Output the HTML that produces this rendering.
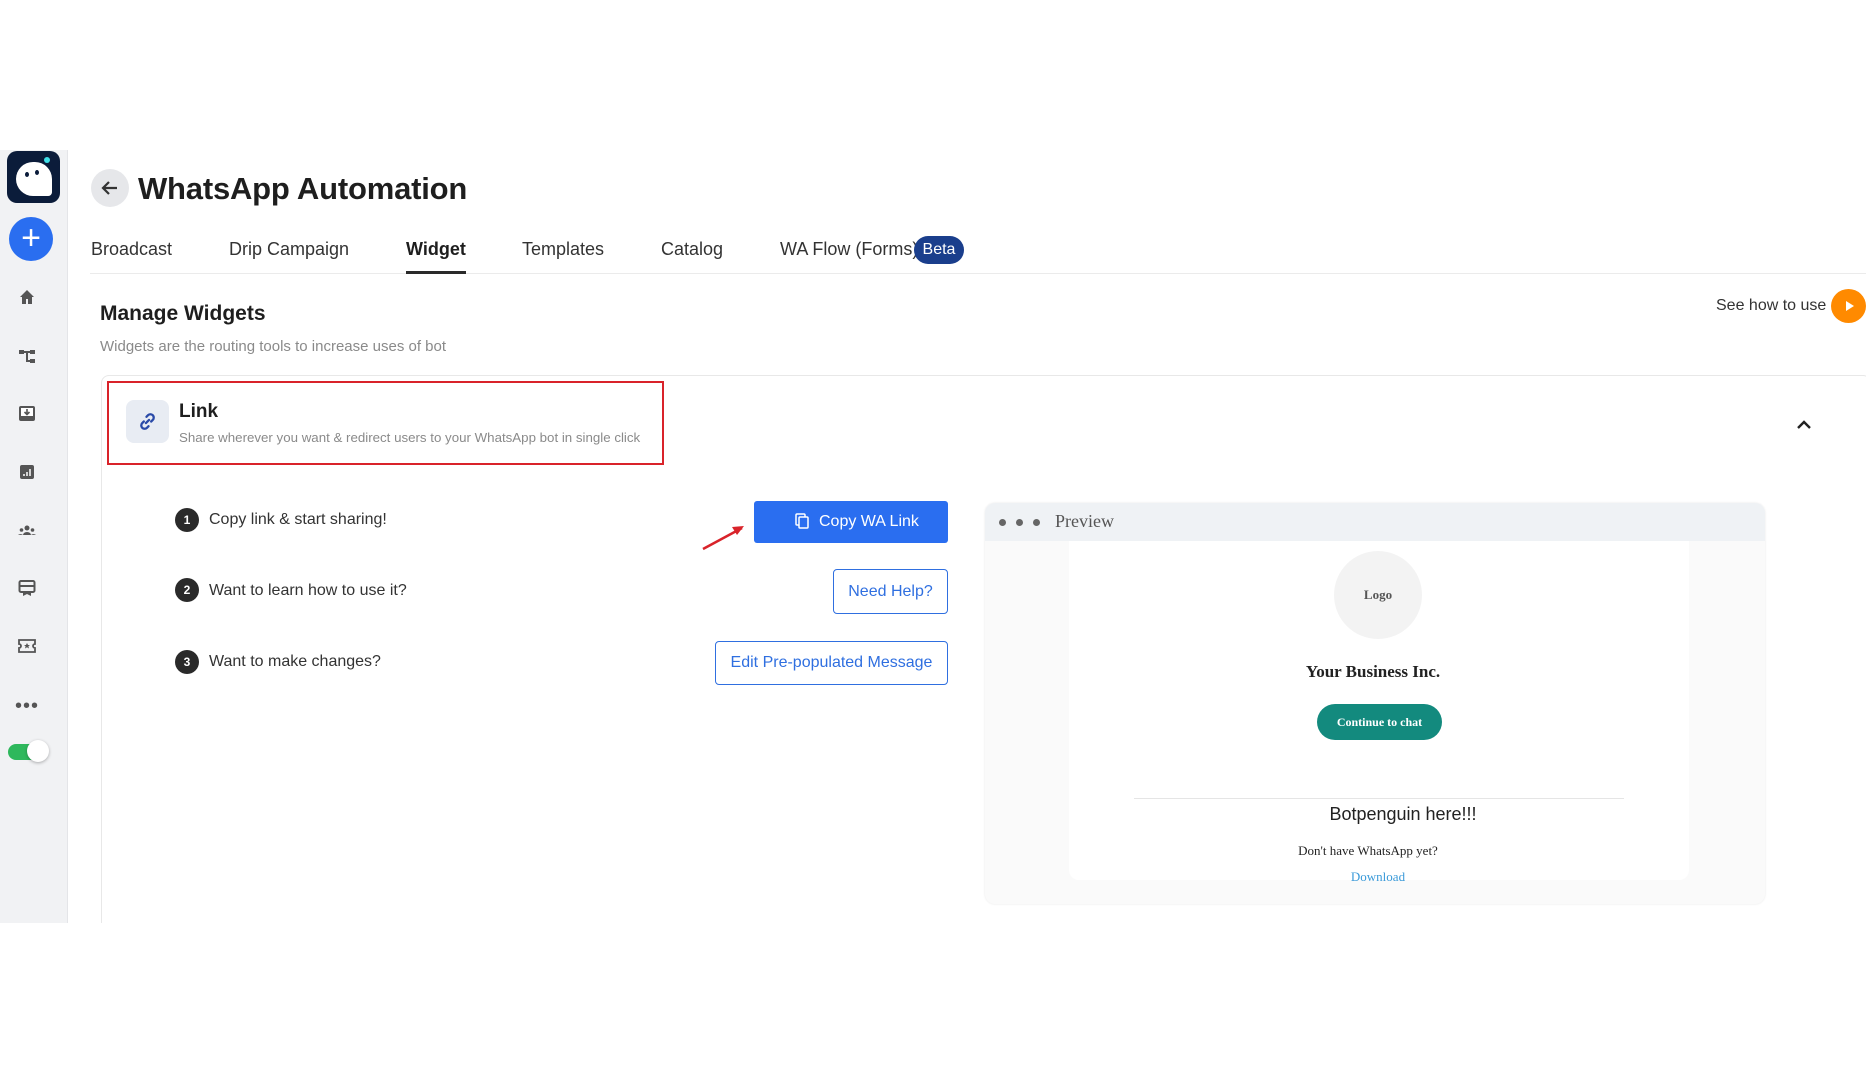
<!DOCTYPE html>
<html><head><meta charset="utf-8"><style>
*{box-sizing:border-box;margin:0;padding:0}
body{width:1866px;height:1080px;background:#fff;position:relative;overflow:hidden;font-family:"Liberation Sans",sans-serif;color:#222}
.a{position:absolute}
.side{left:0;top:150px;width:68px;height:773px;background:#f1f2f4;border-right:1px solid #e4e5e8}
.ic{position:absolute;left:17px;width:20px;height:20px}
.tab{position:absolute;top:239px;font-size:18px;color:#333}
.step{position:absolute;left:175px;width:24px;height:24px;border-radius:50%;background:#2a2a2a;color:#fff;font-size:12px;text-align:center;line-height:24px;font-weight:bold}
.st{position:absolute;left:209px;font-size:16px;color:#333}
.ob{position:absolute;border:1px solid #2f6fe0;border-radius:4px;color:#2f6fe0;font-size:16px;text-align:center;background:#fff}
.serif{font-family:"Liberation Serif",serif}
</style></head><body>
<div class="a side"></div>
<div class="a" style="left:7px;top:151px;width:53px;height:52px;background:#0b1c3a;border-radius:10px"></div>
<div class="a" style="left:16px;top:162px;width:36px;height:34px;background:#fff;border-radius:18px 18px 4px 18px"></div>
<div class="a" style="left:25px;top:172px;width:4px;height:5px;background:#0b1c3a;border-radius:50%"></div>
<div class="a" style="left:35px;top:170px;width:4px;height:5px;background:#0b1c3a;border-radius:50%"></div>
<div class="a" style="left:44px;top:157px;width:6px;height:6px;background:#3fe0e8;border-radius:50%"></div>
<div class="a" style="left:9px;top:217px;width:44px;height:44px;background:#2a6ef0;border-radius:50%;color:#fff;font-size:34px;text-align:center;line-height:42px">+</div>
<svg class="ic" style="top:287px" viewBox="0 0 20 20"><path d="M3 10L10 3l7 7h-2v7h-4v-5H9v5H5v-7z" fill="#555"/></svg>
<svg class="ic" style="top:346px" viewBox="0 0 20 20"><rect x="2" y="4" width="5" height="4" fill="#555"/><rect x="13" y="4" width="5" height="4" fill="#555"/><rect x="13" y="13" width="5" height="4" fill="#555"/><path d="M7 6h6M10 6v9h3" stroke="#555" stroke-width="2" fill="none"/></svg>
<svg class="ic" style="top:404px" viewBox="0 0 20 20"><rect x="2" y="2" width="16" height="15" rx="2" fill="#555"/><rect x="4" y="4" width="12" height="8" fill="#fff"/><path d="M10 5v5M7.5 8l2.5 2.5L12.5 8" stroke="#555" stroke-width="1.6" fill="none"/></svg>
<svg class="ic" style="top:462px" viewBox="0 0 20 20"><rect x="3" y="3" width="14" height="14" rx="2" fill="#555"/><path d="M7 14v-2M10 14v-4M13 14V7" stroke="#fff" stroke-width="1.5"/></svg>
<svg class="ic" style="top:521px" viewBox="0 0 20 20"><circle cx="10" cy="7" r="2.5" fill="#555"/><circle cx="4.5" cy="9" r="1.8" fill="#555"/><circle cx="15.5" cy="9" r="1.8" fill="#555"/><path d="M6 14a4 3 0 0 1 8 0zM1 14a3 2 0 0 1 5 0zM14 14a3 2 0 0 1 5 0z" fill="#555"/></svg>
<svg class="ic" style="top:578px" viewBox="0 0 20 20"><rect x="2.5" y="3" width="15" height="11" rx="1.5" fill="none" stroke="#555" stroke-width="2"/><path d="M3 8h14" stroke="#555" stroke-width="2"/><path d="M6 14v4l4-2 4 2v-4z" fill="#555"/></svg>
<svg class="ic" style="top:636px" viewBox="0 0 20 20"><path d="M2 4h16v4a2 2 0 0 0 0 4v4H2v-4a2 2 0 0 0 0-4z" fill="none" stroke="#555" stroke-width="1.8"/><path d="M10 7l1 2h2l-1.6 1.3.6 2.2-2-1.3-2 1.3.6-2.2L7 9h2z" fill="#555"/></svg>
<div class="a" style="left:15px;top:695px;font-size:20px;color:#555;letter-spacing:1px">•••</div>
<div class="a" style="left:8px;top:744px;width:38px;height:16px;border-radius:8px;background:#2eb85c"></div>
<div class="a" style="left:27px;top:740px;width:22px;height:22px;border-radius:50%;background:#fff;box-shadow:0 1px 3px rgba(0,0,0,.3)"></div>

<div class="a" style="left:91px;top:169px;width:38px;height:38px;border-radius:50%;background:#e6e7ea"></div>
<svg class="a" style="left:100px;top:178px" width="20" height="20" viewBox="0 0 20 20"><path d="M17 10H4M9 4l-6 6 6 6" stroke="#333" stroke-width="2.2" fill="none"/></svg>
<div class="a" style="left:138px;top:171px;font-size:31px;font-weight:bold;color:#1e1e1e;letter-spacing:-0.2px">WhatsApp Automation</div>

<div class="a" style="left:90px;top:273px;width:1776px;height:1px;background:#ebebeb"></div>
<div class="tab" style="left:91px">Broadcast</div>
<div class="tab" style="left:229px">Drip Campaign</div>
<div class="tab" style="left:406px;font-weight:bold;color:#1e1e1e">Widget</div>
<div class="a" style="left:406px;top:271px;width:60px;height:3px;background:#2a2a2a"></div>
<div class="tab" style="left:522px">Templates</div>
<div class="tab" style="left:661px">Catalog</div>
<div class="tab" style="left:780px">WA Flow (Forms)</div>
<div class="a" style="left:914px;top:236px;width:50px;height:28px;border-radius:14px;background:#1a3e8c;color:#fff;font-size:16px;text-align:center;line-height:28px">Beta</div>

<div class="a" style="left:100px;top:302px;font-size:21px;font-weight:bold;color:#1e1e1e">Manage Widgets</div>
<div class="a" style="left:100px;top:338px;font-size:15px;color:#8a8a8a">Widgets are the routing tools to increase uses of bot</div>
<div class="a" style="left:1716px;top:297px;font-size:16px;color:#333">See how to use</div>
<div class="a" style="left:1831px;top:289px;width:35px;height:34px;border-radius:50%;background:#ff8a00"></div>
<svg class="a" style="left:1845px;top:300px" width="10" height="12"><path d="M1 1l8 5-8 5z" fill="#fff"/></svg>

<div class="a" style="left:101px;top:375px;width:1770px;height:560px;border:1px solid #e8e8e8;border-radius:8px"></div>
<div class="a" style="left:107px;top:381px;width:557px;height:84px;border:2px solid #d9232a"></div>
<div class="a" style="left:126px;top:400px;width:43px;height:43px;border-radius:8px;background:#e8ecf3"></div>
<svg class="a" style="left:137px;top:411px" width="21" height="21" viewBox="0 0 20 20"><path d="M8.5 11.5l3-3M9 5.5l1.5-1.5a3 3 0 0 1 4.5 4.5L13.5 10M11 14.5L9.5 16a3 3 0 0 1-4.5-4.5L6.5 10" stroke="#2a4aa8" stroke-width="2.2" fill="none" stroke-linecap="round"/></svg>
<div class="a" style="left:179px;top:401px;font-size:19px;font-weight:bold;color:#1e1e1e">Link</div>
<div class="a" style="left:179px;top:430px;font-size:13.3px;color:#8a8a8a">Share wherever you want &amp; redirect users to your WhatsApp bot in single click</div>
<svg class="a" style="left:1796px;top:418px" width="16" height="12"><path d="M2 10l6-6 6 6" stroke="#222" stroke-width="2.4" fill="none"/></svg>

<div class="step" style="top:508px">1</div><div class="st" style="top:511px">Copy link &amp; start sharing!</div>
<div class="step" style="top:578px">2</div><div class="st" style="top:582px">Want to learn how to use it?</div>
<div class="step" style="top:650px">3</div><div class="st" style="top:653px">Want to make changes?</div>

<svg class="a" style="left:700px;top:520px" width="50" height="32"><path d="M3 29L42 8" stroke="#d9232a" stroke-width="2.5"/><path d="M44 6l-12 1 5 8z" fill="#d9232a"/></svg>
<div class="a" style="left:754px;top:501px;width:194px;height:42px;background:#2a6ef0;border-radius:3px;color:#fff;font-size:16px;line-height:42px;padding-left:65px">Copy WA Link</div>
<svg class="a" style="left:795px;top:513px" width="14" height="16"><rect x="1" y="1" width="9" height="11" rx="1" fill="none" stroke="#fff" stroke-width="1.5"/><rect x="4" y="4" width="9" height="11" rx="1" fill="#2a6ef0" stroke="#fff" stroke-width="1.5"/></svg>
<div class="ob" style="left:833px;top:569px;width:115px;height:45px;line-height:43px">Need Help?</div>
<div class="ob" style="left:715px;top:641px;width:233px;height:44px;line-height:42px">Edit Pre-populated Message</div>

<div class="a" style="left:985px;top:503px;width:780px;height:401px;background:#fafafa;border-radius:10px;box-shadow:0 0 2px rgba(0,0,0,.1)"></div>
<div class="a" style="left:985px;top:503px;width:780px;height:38px;background:#eff2f5;border-radius:10px 10px 0 0"></div>
<div class="a" style="left:999px;top:519px;width:7px;height:7px;border-radius:50%;background:#666"></div>
<div class="a" style="left:1016px;top:519px;width:7px;height:7px;border-radius:50%;background:#666"></div>
<div class="a" style="left:1033px;top:519px;width:7px;height:7px;border-radius:50%;background:#666"></div>
<div class="a serif" style="left:1055px;top:511px;font-size:18px;color:#555">Preview</div>
<div class="a" style="left:1069px;top:541px;width:620px;height:339px;background:#fff;border-radius:0 0 10px 10px"></div>
<div class="a serif" style="left:1334px;top:551px;width:88px;height:88px;border-radius:50%;background:#f3f3f3;font-size:13px;font-weight:bold;color:#555;text-align:center;line-height:88px">Logo</div>
<div class="a serif" style="left:1069px;top:662px;width:608px;text-align:center;font-size:17px;font-weight:bold;color:#222">Your Business Inc.</div>
<div class="a serif" style="left:1317px;top:704px;width:125px;height:36px;border-radius:18px;background:#138a7e;color:#fff;font-size:12px;font-weight:bold;text-align:center;line-height:36px">Continue to chat</div>
<div class="a" style="left:1134px;top:798px;width:490px;height:1px;background:#e5e5e5"></div>
<div class="a" style="left:1228px;top:804px;width:350px;text-align:center;font-size:18px;color:#222">Botpenguin here!!!</div>
<div class="a serif" style="left:1168px;top:843px;width:400px;text-align:center;font-size:13px;color:#222">Don't have WhatsApp yet?</div>
<div class="a serif" style="left:1178px;top:869px;width:400px;text-align:center;font-size:13px;color:#3a9ad9">Download</div>
<div class="a" style="left:0;top:923px;width:1866px;height:157px;background:#fff"></div>
</body></html>
